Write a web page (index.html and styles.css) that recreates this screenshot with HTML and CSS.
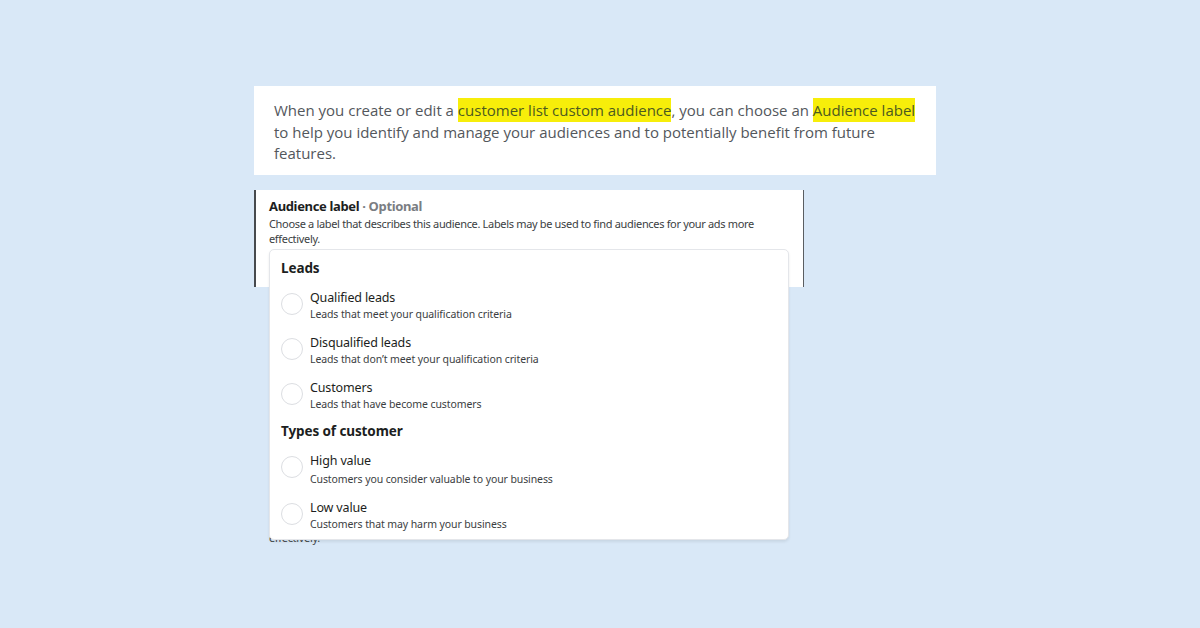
FILE: index.html
```html
<!DOCTYPE html>
<html lang="en">
<head>
<meta charset="utf-8">
<title>Audience label</title>
<link rel="stylesheet" href="styles.css">
</head>
<body>
<main class="page">
  <section class="intro">
    <p>When you create or edit a <mark>customer list custom audience</mark>, you can choose an <mark>Audience label</mark> to help you identify and manage your audiences and to potentially benefit from future features.</p>
  </section>

  <section class="field">
    <h2 class="field-title">Audience label <span class="optional">· Optional</span></h2>
    <p class="field-help">Choose a label that describes this audience. Labels may be used to find audiences for your ads more effectively.</p>

    <div class="menu" role="listbox">
      <h3 class="group-title">Leads</h3>
      <div class="option">
        <span class="radio"></span>
        <div class="option-text">
          <div class="option-name">Qualified leads</div>
          <div class="option-desc">Leads that meet your qualification criteria</div>
        </div>
      </div>
      <div class="option">
        <span class="radio"></span>
        <div class="option-text">
          <div class="option-name">Disqualified leads</div>
          <div class="option-desc">Leads that don’t meet your qualification criteria</div>
        </div>
      </div>
      <div class="option">
        <span class="radio"></span>
        <div class="option-text">
          <div class="option-name">Customers</div>
          <div class="option-desc">Leads that have become customers</div>
        </div>
      </div>

      <h3 class="group-title group-second">Types of customer</h3>
      <div class="option option-wide option-tall">
        <span class="radio"></span>
        <div class="option-text">
          <div class="option-name">High value</div>
          <div class="option-desc">Customers you consider valuable to your business</div>
        </div>
      </div>
      <div class="option option-wide">
        <span class="radio"></span>
        <div class="option-text">
          <div class="option-name">Low value</div>
          <div class="option-desc">Customers that may harm your business</div>
        </div>
      </div>
    </div>
  </section>
  <p class="trail">effectively.</p>
</main>
</body>
</html>
```

FILE: styles.css
```css
* {
  box-sizing: border-box;
}

html, body {
  margin: 0;
  padding: 0;
}

body {
  width: 1200px;
  height: 628px;
  overflow: hidden;
  background: #d9e8f7;
  font-family: "Noto Sans", "Open Sans", sans-serif;
}

.page {
  display: flex;
  flex-direction: column;
  align-items: flex-start;
  padding: 86px 0 0 254px;
}

/* intro paragraph card */
.intro {
  width: 682px;
  height: 89px;
  background: #ffffff;
  padding: 14px 16px 0 20px;
}

.intro p {
  margin: 0;
  font-family: "Open Sans", sans-serif;
  font-size: 15px;
  line-height: 21.5px;
  color: #53575c;
}

.intro mark {
  background: #f7ee0a;
  color: #4c5a20;
  padding: 2px 0;
}

/* audience label field */
.field {
  position: relative;
  margin-top: 15px;
  width: 550px;
  height: 97px;
  background: #ffffff;
  border-left: 2px solid #474a4e;
  border-right: 1px solid #5a5d61;
  padding: 7px 12px 0 13px;
}

.field-title {
  margin: 0;
  font-size: 13px;
  line-height: 18px;
  font-weight: 700;
  letter-spacing: -0.35px;
  color: #1c1e21;
}

.optional {
  color: #7a7d82;
}

.field-help {
  margin: 1px 0 0;
  font-size: 11px;
  line-height: 15px;
  letter-spacing: -0.33px;
  color: #3b3e42;
}

/* dropdown menu over the field */
.menu {
  position: absolute;
  left: 13px;
  top: 59px;
  width: 520px;
  height: 291px;
  background: #ffffff;
  border: 1px solid #e4e6ea;
  border-radius: 5px;
  box-shadow: 0 2px 3px rgba(0, 0, 0, 0.08);
  padding: 8px 11px 0 11px;
  z-index: 2;
}

.group-title {
  margin: 0 0 11px;
  font-size: 13.5px;
  line-height: 20px;
  font-weight: 700;
  letter-spacing: -0.1px;
  color: #1c1e21;
}

.group-second {
  margin-top: -3px;
  margin-bottom: 11px;
}

.option {
  display: flex;
  align-items: flex-start;
  gap: 7px;
  height: 45px;
}

.option-wide {
  height: 47px;
}

.option-tall .option-desc {
  margin-top: 2px;
}

.radio {
  flex: none;
  width: 22px;
  height: 22px;
  margin-top: 4px;
  border: 1px solid #dcdee2;
  border-radius: 50%;
  background: #ffffff;
}

.option-name {
  font-size: 12.5px;
  line-height: 18px;
  letter-spacing: -0.15px;
  color: #1c1e21;
}

.option-desc {
  font-size: 10.5px;
  line-height: 15px;
  letter-spacing: -0.1px;
  color: #3b3e42;
}

/* line of the field help text showing below the menu */
.trail {
  margin: 243px 0 0 15px;
  font-size: 11px;
  line-height: 15px;
  letter-spacing: -0.33px;
  color: #45484c;
}
```
